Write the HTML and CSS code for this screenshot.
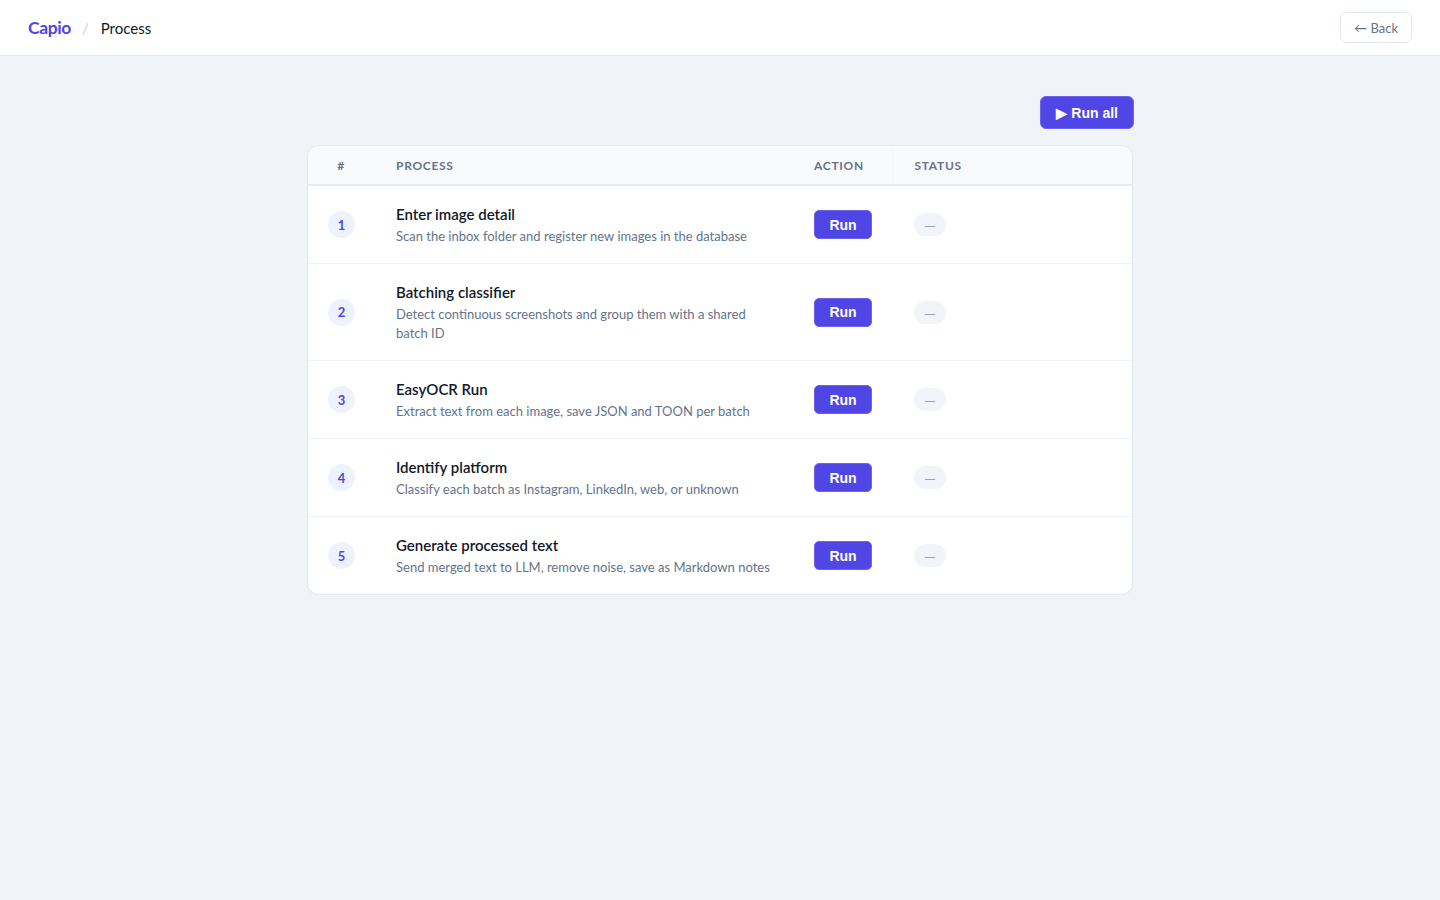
FILE: index.html
```html
<!DOCTYPE html>
<html lang="en">

<head>
    <meta charset="UTF-8">
    <meta name="viewport" content="width=device-width, initial-scale=1.0">
    <title>Capio - Process</title>
    <link rel="stylesheet" href="styles.css">
</head>

<body>
    <header class="topbar">
        <nav class="crumbs">
            <a class="brand" href="#">Capio</a>
            <span class="sep">/</span>
            <span class="current">Process</span>
        </nav>
        <a class="back" href="#">&larr; Back</a>
    </header>

    <main class="page">
        <div class="toolbar">
            <button class="btn btn-all">&#9654; Run all</button>
        </div>

        <div class="card">
            <table class="steps">
                <colgroup>
                    <col class="c-num">
                    <col class="c-proc">
                    <col class="c-act">
                    <col>
                </colgroup>
                <thead>
                    <tr>
                        <th class="num">#</th>
                        <th>Process</th>
                        <th class="act">Action</th>
                        <th>Status</th>
                    </tr>
                </thead>
                <tbody>
                    <tr>
                        <td class="num"><span class="badge">1</span></td>
                        <td class="proc">
                            <div class="title">Enter image detail</div>
                            <div class="desc">Scan the inbox folder and register new images in the database</div>
                        </td>
                        <td class="act"><button class="btn btn-run">Run</button></td>
                        <td><span class="status">&mdash;</span></td>
                    </tr>
                    <tr>
                        <td class="num"><span class="badge">2</span></td>
                        <td class="proc">
                            <div class="title">Batching classifier</div>
                            <div class="desc">Detect continuous screenshots and group them with a shared batch ID</div>
                        </td>
                        <td class="act"><button class="btn btn-run">Run</button></td>
                        <td><span class="status">&mdash;</span></td>
                    </tr>
                    <tr>
                        <td class="num"><span class="badge">3</span></td>
                        <td class="proc">
                            <div class="title">EasyOCR Run</div>
                            <div class="desc">Extract text from each image, save JSON and TOON per batch</div>
                        </td>
                        <td class="act"><button class="btn btn-run">Run</button></td>
                        <td><span class="status">&mdash;</span></td>
                    </tr>
                    <tr>
                        <td class="num"><span class="badge">4</span></td>
                        <td class="proc">
                            <div class="title">Identify platform</div>
                            <div class="desc">Classify each batch as Instagram, LinkedIn, web, or unknown</div>
                        </td>
                        <td class="act"><button class="btn btn-run">Run</button></td>
                        <td><span class="status">&mdash;</span></td>
                    </tr>
                    <tr>
                        <td class="num"><span class="badge">5</span></td>
                        <td class="proc">
                            <div class="title">Generate processed text</div>
                            <div class="desc">Send merged text to LLM, remove noise, save as Markdown notes</div>
                        </td>
                        <td class="act"><button class="btn btn-run">Run</button></td>
                        <td><span class="status">&mdash;</span></td>
                    </tr>
                </tbody>
            </table>
        </div>
    </main>
</body>

</html>
```

FILE: styles.css
```css
body {
    margin: 0;
    background-color: #f0f3f8;
    font-family: Lato, "Noto Sans", sans-serif;
    color: #0f172a;
}

a {
    text-decoration: none;
}

/* barra superior */
.topbar {
    height: 55px;
    background-color: #fff;
    border-bottom: 1px solid #e5e9f0;
    display: flex;
    align-items: center;
    justify-content: space-between;
    padding: 0 28px;
}

.crumbs {
    display: flex;
    align-items: center;
    gap: 11px;
}

.brand {
    color: #4f46e5;
    font-weight: 700;
    font-size: 17.5px;
    letter-spacing: -0.4px;
}

.sep {
    color: #cbd5e1;
    font-size: 15px;
}

.current {
    color: #111827;
    font-size: 15px;
    margin-left: 1px;
}

.back {
    color: #64748b;
    font-size: 13px;
    border: 1px solid #e2e8f0;
    border-radius: 6px;
    padding: 7px 13px 6px;
}

/* contenido */
.page {
    width: 826px;
    margin: 0 auto;
    padding-top: 40px;
}

.toolbar {
    display: flex;
    justify-content: flex-end;
    margin-bottom: 16px;
}

.btn {
    font-family: "Liberation Sans", Arial, sans-serif;
    font-weight: 700;
    color: #fff;
    background-color: #4f46e5;
    border: 1px solid #6c63ee;
    cursor: pointer;
}

.btn-all {
    height: 33px;
    padding: 0 15px;
    border-radius: 6px;
    font-size: 14px;
    margin-right: -1px;
}

.card {
    background-color: #fff;
    border: 1px solid #e5e9f0;
    border-radius: 12px;
    overflow: hidden;
    box-shadow: 0 1px 2px rgba(15, 23, 42, 0.03);
}

.steps {
    width: 100%;
    border-collapse: collapse;
    table-layout: fixed;
}

.c-num {
    width: 66px;
}

.c-proc {
    width: 418px;
}

.c-act {
    width: 100px;
}

.steps th {
    background-color: #f8fafc;
    border-bottom: 2px solid #e6eaf1;
    text-align: left;
    font-size: 12px;
    font-weight: 700;
    text-transform: uppercase;
    letter-spacing: 0.7px;
    color: #64748b;
    height: 38px;
    padding: 0 22px;
}

.steps th.act {
    border-right: 1px solid #f3f5f9;
}

.steps td {
    padding: 17px 22px;
    vertical-align: middle;
    border-bottom: 1px solid #eef1f5;
}

.steps td.proc {
    padding-right: 14px;
}

.steps tbody tr:last-child td {
    border-bottom: none;
}

.steps .num {
    text-align: center;
    padding: 0;
}

.badge {
    display: inline-flex;
    align-items: center;
    justify-content: center;
    width: 27px;
    height: 27px;
    border-radius: 50%;
    background-color: #eef2ff;
    color: #4f46e5;
    font-size: 13px;
    font-weight: 700;
    margin-left: 1px;
}

.title {
    font-size: 15px;
    font-weight: 600;
    line-height: 22px;
    color: #111827;
}

.desc {
    font-size: 13px;
    line-height: 19px;
    margin-top: 2px;
    color: #64748b;
}

.btn-run {
    width: 58px;
    height: 29px;
    border-radius: 5px;
    font-size: 14px;
    padding: 0;
}

.status {
    display: inline-flex;
    align-items: center;
    justify-content: center;
    width: 32px;
    height: 23px;
    border-radius: 12px;
    background-color: #f1f5f9;
    color: #94a3b8;
    font-family: "Noto Sans", sans-serif;
    font-size: 11px;
}
```
